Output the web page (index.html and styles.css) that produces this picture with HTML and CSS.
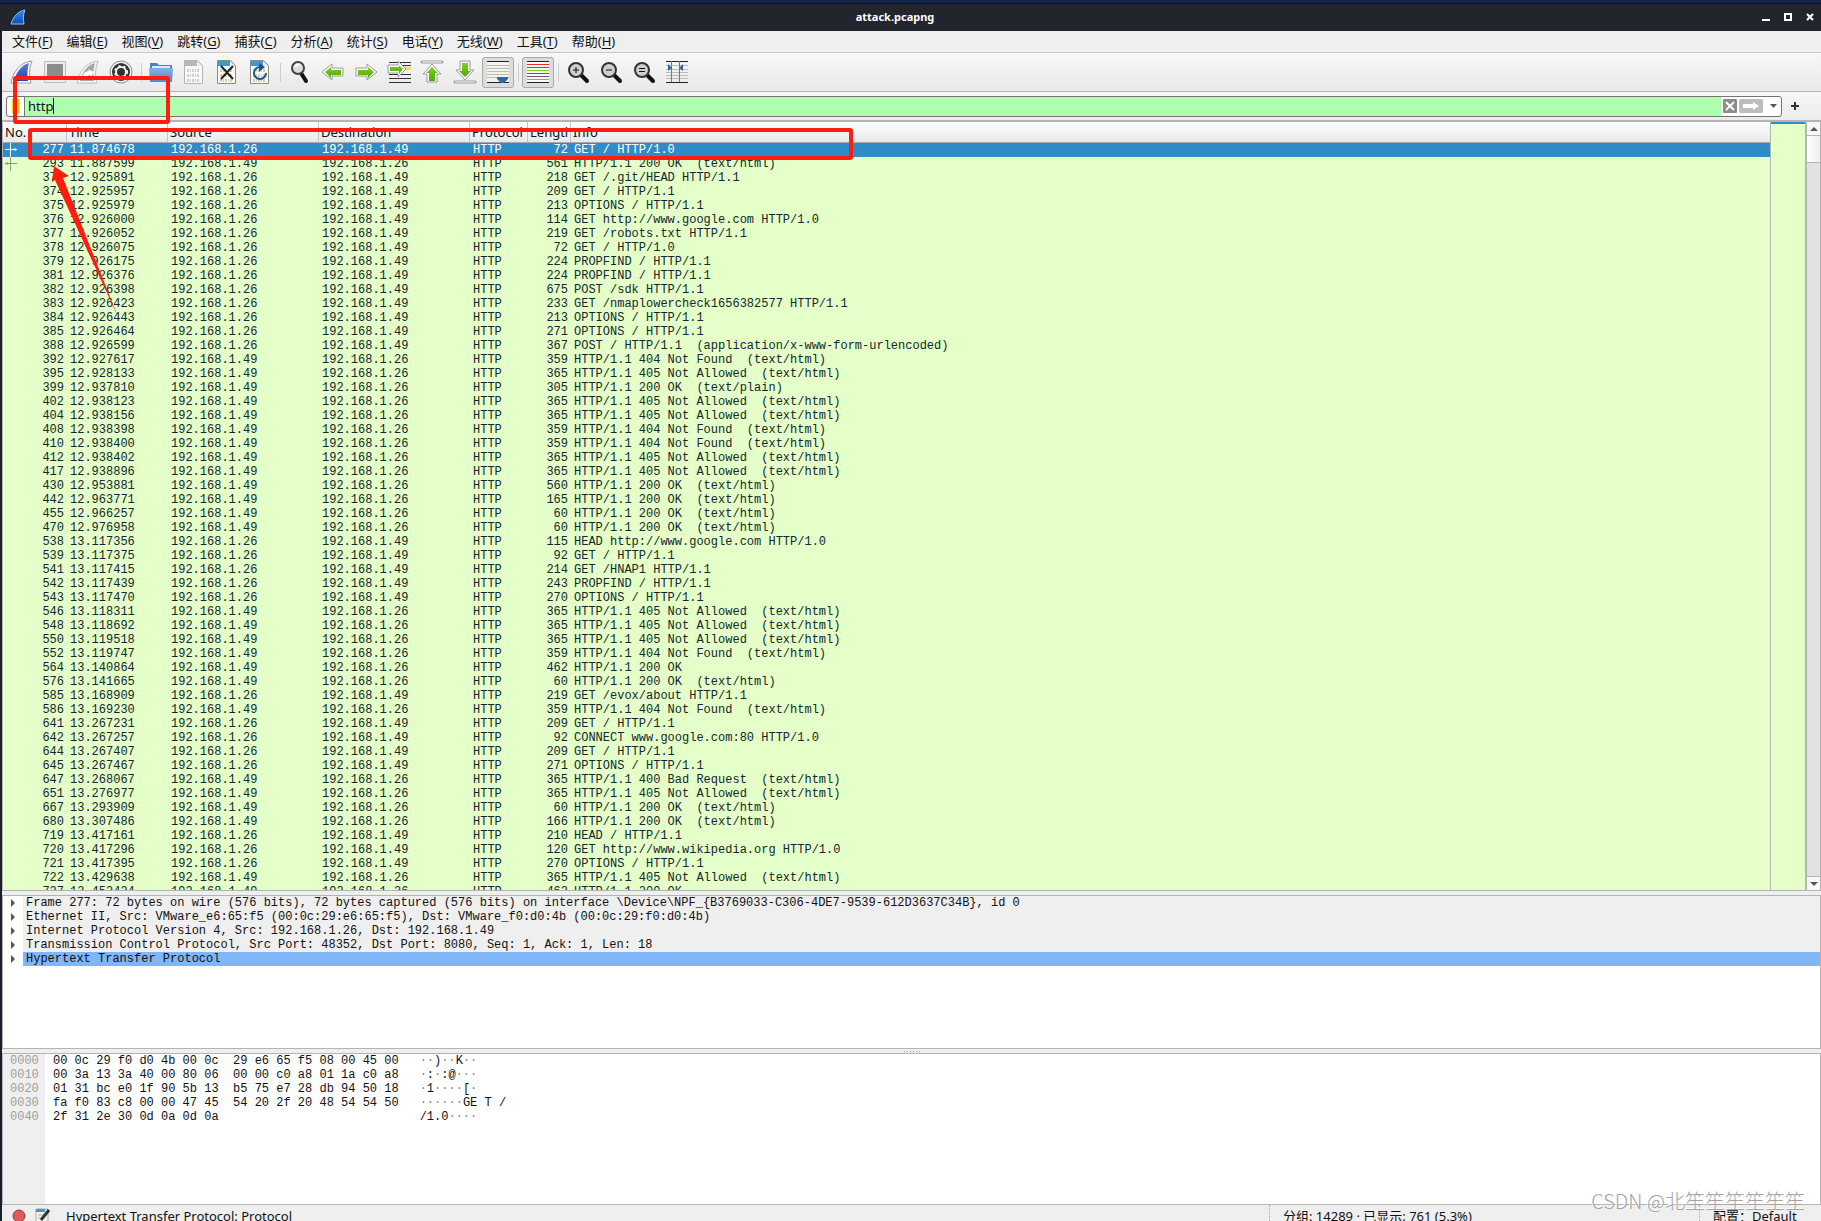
FILE: index.html
```
<!DOCTYPE html>
<html lang="zh-CN">
<head>
<meta charset="utf-8">
<title>attack.pcapng</title>
<link rel="stylesheet" href="styles.css">
</head>
<body>
<svg class="defs" width="0" height="0" aria-hidden="true">
  <defs>
    <linearGradient id="blueFin" x1="0" y1="0" x2="0" y2="1"><stop offset="0" stop-color="#5a82d8"/><stop offset="1" stop-color="#1d3fb8"/></linearGradient>
    <linearGradient id="logoFin" x1="0" y1="0" x2="0" y2="1"><stop offset="0" stop-color="#2f8df0"/><stop offset="1" stop-color="#0a4fc4"/></linearGradient>
    <linearGradient id="folder" x1="0" y1="0" x2="0" y2="1"><stop offset="0" stop-color="#86b0e4"/><stop offset="1" stop-color="#5088d2"/></linearGradient>
    <linearGradient id="green" x1="0" y1="0" x2="0" y2="1"><stop offset="0" stop-color="#7fd321"/><stop offset="1" stop-color="#4fa70c"/></linearGradient>
    <g id="lens"><path d="M14 14l6 6" stroke="#111" stroke-width="4" stroke-linecap="round"/><circle cx="9" cy="9" r="7" fill="#cfcfcf" stroke="#333" stroke-width="2"/></g>
    <g id="bits" fill="none" stroke-width="3" stroke-dasharray="2 1 1 1"><path d="M5 10.500h13M5 15.500h13M5 20.500h13"/></g>
  </defs>
</svg>
<div class="desktop">
<main class="window">
  <header class="titlebar">
    <svg class="logo" width="16" height="16" viewBox="0 0 16 16"><path d="M1 15C3 8 8 2 15 1c-2 5-2 9-1 14z" fill="url(#logoFin)" stroke="#8fc0f5"/></svg>
    <h1>attack.pcapng</h1>
    <div class="winbuttons">
      <button aria-label="最小化"><svg width="8" height="10"><path d="M0 7h8v2H0z" fill="#fff"/></svg></button>
      <button aria-label="最大化"><svg width="8" height="10"><path d="M1 2h6v6H1z" fill="none" stroke="#fff" stroke-width="2"/></svg></button>
      <button aria-label="关闭"><svg width="8" height="10"><path d="M1 2l6 6M7 2L1 8" stroke="#fff" stroke-width="2"/></svg></button>
    </div>
  </header>

  <nav class="menubar">
    <button>文件(<u>F</u>)</button><button>编辑(<u>E</u>)</button><button>视图(<u>V</u>)</button><button>跳转(<u>G</u>)</button><button>捕获(<u>C</u>)</button><button>分析(<u>A</u>)</button><button>统计(<u>S</u>)</button><button>电话(<u>Y</u>)</button><button>无线(<u>W</u>)</button><button>工具(<u>T</u>)</button><button>帮助(<u>H</u>)</button>
  </nav>

  <div class="toolbar" role="toolbar">
    <button aria-label="开始捕获"><svg width="24" height="24"><path d="M1 23C3 12 10 2 22 1c-3 8-3 15-1 22z" fill="#fff" stroke="#999"/><path d="M4 21C6 13 11 5 19 3c-2 7-2 12-1 18z" fill="url(#blueFin)"/></svg></button>
    <button aria-label="停止捕获"><svg width="24" height="24"><path d="M1.500 1.500h21v21h-21z" fill="#eee" stroke="#bbb"/><path d="M4 4h16v15H4z" fill="#8c8c8c"/></svg></button>
    <button aria-label="重新捕获"><svg width="24" height="24"><path d="M1 23C3 12 10 2 22 1c-3 8-3 15-1 22z" fill="#f6f6f6" stroke="#bbb"/><path d="M4 21C6 13 11 5 19 3c-2 7-2 12-1 18z" fill="#a6a6a6"/><path d="M7 19c-1-5 2-8 6-8l-1-2 6 3-3 5-1-2c-2 0-3 1-3 4z" fill="#fff"/></svg></button>
    <button aria-label="捕获选项"><svg width="24" height="24"><circle cx="12" cy="12" r="11" fill="#f4f4f4" stroke="#8a8a8a"/><circle cx="12" cy="12" r="9" fill="#333"/><circle cx="12" cy="12" r="5" fill="none" stroke="#f4f4f4" stroke-width="2"/><circle cx="12" cy="12" r="6" fill="none" stroke="#f4f4f4" stroke-width="2" stroke-dasharray="2 3"/><circle cx="12" cy="12" r="3" fill="#333"/></svg></button>
    <span class="sep"></span>
    <button aria-label="打开"><svg width="24" height="24"><path d="M1 3h7l2 2h13v16H1z" fill="#4d80c0"/><path d="M3 6h18v4H3z" fill="#dce8f6"/><path d="M0 8h24l-1 14H1z" fill="url(#folder)"/></svg></button>
    <button aria-label="保存"><svg width="24" height="24"><path d="M2.500 .500h13l5 5v18h-18z" fill="#fafafa" stroke="#b4b4b4"/><path d="M3 1h12l5 5H3z" fill="#b8b8b8"/><path d="M15 1v5h5z" fill="#eee"/><use href="#bits" stroke="#cfcfcf"/></svg></button>
    <button aria-label="关闭文件"><svg width="24" height="24"><path d="M2.500 .500h13l5 5v18h-18z" fill="#fbfbee" stroke="#8b8b7d"/><path d="M3 1h12l5 5H3z" fill="#3d9ad3"/><path d="M15 1v5h5z" fill="#e8f2fa"/><use href="#bits" stroke="#cdcdbc"/><path d="M6 6l12 13M18 6L6 19" stroke="#222" stroke-width="2"/></svg></button>
    <button aria-label="重新加载"><svg width="24" height="24"><path d="M2.500 .500h13l5 5v18h-18z" fill="#fbfbee" stroke="#8b8b7d"/><path d="M3 1h12l5 5H3z" fill="#3d9ad3"/><path d="M15 1v5h5z" fill="#e8f2fa"/><use href="#bits" stroke="#cdcdbc"/><path d="M12 7a6 6 0 1 0 6 6" fill="none" stroke="#23508f" stroke-width="2"/><path d="M11 3l6 4-6 5z" fill="#23508f"/></svg></button>
    <span class="sep"></span>
    <button aria-label="查找"><svg width="24" height="24"><path d="M13 13l5 8" stroke="#111" stroke-width="4" stroke-linecap="round"/><circle cx="10" cy="8" r="6" fill="#ddd" stroke="#444" stroke-width="2"/><path d="M7 7c1-2 3-3 5-2" stroke="#fff" stroke-width="2" fill="none"/></svg></button>
    <button aria-label="后退"><svg width="24" height="24"><path d="M1 12l10-8v4h11v8H11v4z" fill="#fff" stroke="#999"/><path d="M4 12l6-5v3h10v5H10v3z" fill="url(#green)"/></svg></button>
    <button aria-label="前进"><svg width="24" height="24"><path d="M23 12L13 4v4H2v8h11v4z" fill="#fff" stroke="#999"/><path d="M20 12l-6-5v3H4v5h10v3z" fill="url(#green)"/></svg></button>
    <button aria-label="转到分组"><svg width="24" height="24"><path d="M2 2.500h22M2 5.500h22M2 14.500h22M2 18.500h22M2 22.500h22" stroke="#2d3436" stroke-width="1"/><path d="M17 7h7v3h-7z" fill="#ffdf4d"/><path d="M19 9L11 1v4H1v8h10v4z" fill="#fff" stroke="#999"/><path d="M16 9l-4-4v2H3v4h9v3z" fill="url(#green)"/></svg></button>
    <button aria-label="首个分组"><svg width="24" height="24"><path d="M2 2h20" stroke="#999" stroke-width="3" stroke-linecap="round"/><path d="M2 2h20" stroke="#fff"/><path d="M12 4l9 10h-4v8H7v-8H3z" fill="#fff" stroke="#999"/><path d="M12 7l6 6h-3v8H9v-8H6z" fill="url(#green)"/></svg></button>
    <button aria-label="末个分组"><svg width="24" height="24"><path d="M2 22h20" stroke="#999" stroke-width="3" stroke-linecap="round"/><path d="M2 22h20" stroke="#fff"/><path d="M12 20L3 10h4V1h10v9h4z" fill="#fff" stroke="#999"/><path d="M12 17l-6-6h3V3h6v8h3z" fill="url(#green)"/></svg></button>
    <button class="on" aria-pressed="true" aria-label="自动滚动"><svg width="24" height="24"><path d="M1 1h22v22H1z" fill="#f2f2ef"/><path d="M1 5.500h22M1 8.500h22M1 11.500h22M1 14.500h22M1 17.500h22" stroke="#b9bbb4"/><path d="M1 1.500h22M1 22.500h22" stroke="#222"/><path d="M11 17h11v2l-4 4h-3l-4-4z" fill="#3465a4"/></svg></button>
    <span class="sep"></span>
    <button class="on" aria-pressed="true" aria-label="着色"><svg width="24" height="24"><path d="M1 1h22v22H1z" fill="#f8f8f8"/><path d="M1 1.500h22M1 22.500h22" stroke="#222"/><path d="M1 4.500h22" stroke="#ef2929"/><path d="M1 7.500h22" stroke="#3465a4"/><path d="M1 10.500h22" stroke="#73d216"/><path d="M1 13.500h22" stroke="#3465a4"/><path d="M1 16.500h22" stroke="#75507b"/><path d="M1 19.500h22" stroke="#c4a000"/></svg></button>
    <span class="sep"></span>
    <button aria-label="放大"><svg width="24" height="24"><use href="#lens" x="1" y="1"/><path d="M7 10h6M10 7v6" stroke="#111"/></svg></button>
    <button aria-label="缩小"><svg width="24" height="24"><use href="#lens" x="1" y="1"/><path d="M7 10h6" stroke="#111"/></svg></button>
    <button aria-label="正常大小"><svg width="24" height="24"><use href="#lens" x="1" y="1"/><path d="M7 8.500h6M7 11.500h6" stroke="#111"/></svg></button>
    <button aria-label="调整列宽"><svg width="24" height="24"><path d="M1 5.500h22M1 9.500h22M1 12.500h22M1 15.500h22M1 18.500h22" stroke="#b9bbb4"/><path d="M1 1.500h22M1 22.500h22" stroke="#222"/><path d="M6.500 1v21M14.500 1v21" stroke="#777"/><path d="M3 4l4 4-4 3zM18 4l-4 4 4 3z" fill="#3465a4"/></svg></button>
  </div>

  <div class="filterbar">
    <div class="filterbox">
      <button class="bookmark" aria-label="书签"><svg width="8" height="14"><path d="M0 0h8v14H0z" fill="#f5d900"/></svg></button>
      <label class="filter"><input type="text" value="http" aria-label="显示过滤器"><span class="caret"></span></label>
      <button aria-label="清除"><svg width="14" height="14"><rect width="14" height="14" rx="1" fill="#8b8e88"/><path d="M3 3l8 8M11 3l-8 8" stroke="#fff" stroke-width="2"/></svg></button>
      <button aria-label="应用"><svg width="24" height="14"><rect width="24" height="14" rx="2" fill="#bdbdbd"/><path d="M4 5h10V3l6 4-6 4V9H4z" fill="#fff"/></svg></button>
      <button class="drop" aria-label="历史"><svg width="8" height="14"><path d="M1 5h7L4.500 9z" fill="#555"/></svg></button>
    </div>
    <button class="add" aria-label="添加按钮"><svg width="8" height="8"><path d="M0 4h8M4 0v8" stroke="#333" stroke-width="2"/></svg></button>
  </div>

  <section class="packets">
    <div class="list">
      <table>
        <colgroup><col class="c-no"><col class="c-time"><col class="c-addr"><col class="c-addr"><col class="c-proto"><col class="c-len"><col></colgroup>
        <thead><tr><th>No.</th><th>Time</th><th>Source</th><th>Destination</th><th>Protocol</th><th>Length</th><th>Info</th></tr></thead>
        <tbody>
        <tr class="selected"><td><svg class="mark" width="16" height="14"><path d="M7.500 0v14M2 6.500h12M12 5v3" stroke="#fff"/></svg>277<td>11.874678<td>192.168.1.26<td>192.168.1.49<td>HTTP<td>72<td>GET / HTTP/1.0</tr>
        <tr><td><svg class="mark" width="16" height="14"><path d="M7.500 0v14M2 6.500h12M4 5v3" stroke="#8b9a80"/></svg>293<td>11.887599<td>192.168.1.49<td>192.168.1.26<td>HTTP<td>561<td>HTTP/1.1 200 OK  (text/html)</tr>
        <tr><td>372<td>12.925891<td>192.168.1.26<td>192.168.1.49<td>HTTP<td>218<td>GET /.git/HEAD HTTP/1.1</tr>
        <tr><td>374<td>12.925957<td>192.168.1.26<td>192.168.1.49<td>HTTP<td>209<td>GET / HTTP/1.1</tr>
        <tr><td>375<td>12.925979<td>192.168.1.26<td>192.168.1.49<td>HTTP<td>213<td>OPTIONS / HTTP/1.1</tr>
        <tr><td>376<td>12.926000<td>192.168.1.26<td>192.168.1.49<td>HTTP<td>114<td>GET http://www.google.com HTTP/1.0</tr>
        <tr><td>377<td>12.926052<td>192.168.1.26<td>192.168.1.49<td>HTTP<td>219<td>GET /robots.txt HTTP/1.1</tr>
        <tr><td>378<td>12.926075<td>192.168.1.26<td>192.168.1.49<td>HTTP<td>72<td>GET / HTTP/1.0</tr>
        <tr><td>379<td>12.926175<td>192.168.1.26<td>192.168.1.49<td>HTTP<td>224<td>PROPFIND / HTTP/1.1</tr>
        <tr><td>381<td>12.926376<td>192.168.1.26<td>192.168.1.49<td>HTTP<td>224<td>PROPFIND / HTTP/1.1</tr>
        <tr><td>382<td>12.926398<td>192.168.1.26<td>192.168.1.49<td>HTTP<td>675<td>POST /sdk HTTP/1.1</tr>
        <tr><td>383<td>12.926423<td>192.168.1.26<td>192.168.1.49<td>HTTP<td>233<td>GET /nmaplowercheck1656382577 HTTP/1.1</tr>
        <tr><td>384<td>12.926443<td>192.168.1.26<td>192.168.1.49<td>HTTP<td>213<td>OPTIONS / HTTP/1.1</tr>
        <tr><td>385<td>12.926464<td>192.168.1.26<td>192.168.1.49<td>HTTP<td>271<td>OPTIONS / HTTP/1.1</tr>
        <tr><td>388<td>12.926599<td>192.168.1.26<td>192.168.1.49<td>HTTP<td>367<td>POST / HTTP/1.1  (application/x-www-form-urlencoded)</tr>
        <tr><td>392<td>12.927617<td>192.168.1.49<td>192.168.1.26<td>HTTP<td>359<td>HTTP/1.1 404 Not Found  (text/html)</tr>
        <tr><td>395<td>12.928133<td>192.168.1.49<td>192.168.1.26<td>HTTP<td>365<td>HTTP/1.1 405 Not Allowed  (text/html)</tr>
        <tr><td>399<td>12.937810<td>192.168.1.49<td>192.168.1.26<td>HTTP<td>305<td>HTTP/1.1 200 OK  (text/plain)</tr>
        <tr><td>402<td>12.938123<td>192.168.1.49<td>192.168.1.26<td>HTTP<td>365<td>HTTP/1.1 405 Not Allowed  (text/html)</tr>
        <tr><td>404<td>12.938156<td>192.168.1.49<td>192.168.1.26<td>HTTP<td>365<td>HTTP/1.1 405 Not Allowed  (text/html)</tr>
        <tr><td>408<td>12.938398<td>192.168.1.49<td>192.168.1.26<td>HTTP<td>359<td>HTTP/1.1 404 Not Found  (text/html)</tr>
        <tr><td>410<td>12.938400<td>192.168.1.49<td>192.168.1.26<td>HTTP<td>359<td>HTTP/1.1 404 Not Found  (text/html)</tr>
        <tr><td>412<td>12.938402<td>192.168.1.49<td>192.168.1.26<td>HTTP<td>365<td>HTTP/1.1 405 Not Allowed  (text/html)</tr>
        <tr><td>417<td>12.938896<td>192.168.1.49<td>192.168.1.26<td>HTTP<td>365<td>HTTP/1.1 405 Not Allowed  (text/html)</tr>
        <tr><td>430<td>12.953881<td>192.168.1.49<td>192.168.1.26<td>HTTP<td>560<td>HTTP/1.1 200 OK  (text/html)</tr>
        <tr><td>442<td>12.963771<td>192.168.1.49<td>192.168.1.26<td>HTTP<td>165<td>HTTP/1.1 200 OK  (text/html)</tr>
        <tr><td>455<td>12.966257<td>192.168.1.49<td>192.168.1.26<td>HTTP<td>60<td>HTTP/1.1 200 OK  (text/html)</tr>
        <tr><td>470<td>12.976958<td>192.168.1.49<td>192.168.1.26<td>HTTP<td>60<td>HTTP/1.1 200 OK  (text/html)</tr>
        <tr><td>538<td>13.117356<td>192.168.1.26<td>192.168.1.49<td>HTTP<td>115<td>HEAD http://www.google.com HTTP/1.0</tr>
        <tr><td>539<td>13.117375<td>192.168.1.26<td>192.168.1.49<td>HTTP<td>92<td>GET / HTTP/1.1</tr>
        <tr><td>541<td>13.117415<td>192.168.1.26<td>192.168.1.49<td>HTTP<td>214<td>GET /HNAP1 HTTP/1.1</tr>
        <tr><td>542<td>13.117439<td>192.168.1.26<td>192.168.1.49<td>HTTP<td>243<td>PROPFIND / HTTP/1.1</tr>
        <tr><td>543<td>13.117470<td>192.168.1.26<td>192.168.1.49<td>HTTP<td>270<td>OPTIONS / HTTP/1.1</tr>
        <tr><td>546<td>13.118311<td>192.168.1.49<td>192.168.1.26<td>HTTP<td>365<td>HTTP/1.1 405 Not Allowed  (text/html)</tr>
        <tr><td>548<td>13.118692<td>192.168.1.49<td>192.168.1.26<td>HTTP<td>365<td>HTTP/1.1 405 Not Allowed  (text/html)</tr>
        <tr><td>550<td>13.119518<td>192.168.1.49<td>192.168.1.26<td>HTTP<td>365<td>HTTP/1.1 405 Not Allowed  (text/html)</tr>
        <tr><td>552<td>13.119747<td>192.168.1.49<td>192.168.1.26<td>HTTP<td>359<td>HTTP/1.1 404 Not Found  (text/html)</tr>
        <tr><td>564<td>13.140864<td>192.168.1.49<td>192.168.1.26<td>HTTP<td>462<td>HTTP/1.1 200 OK</tr>
        <tr><td>576<td>13.141665<td>192.168.1.49<td>192.168.1.26<td>HTTP<td>60<td>HTTP/1.1 200 OK  (text/html)</tr>
        <tr><td>585<td>13.168909<td>192.168.1.26<td>192.168.1.49<td>HTTP<td>219<td>GET /evox/about HTTP/1.1</tr>
        <tr><td>586<td>13.169230<td>192.168.1.49<td>192.168.1.26<td>HTTP<td>359<td>HTTP/1.1 404 Not Found  (text/html)</tr>
        <tr><td>641<td>13.267231<td>192.168.1.26<td>192.168.1.49<td>HTTP<td>209<td>GET / HTTP/1.1</tr>
        <tr><td>642<td>13.267257<td>192.168.1.26<td>192.168.1.49<td>HTTP<td>92<td>CONNECT www.google.com:80 HTTP/1.0</tr>
        <tr><td>644<td>13.267407<td>192.168.1.26<td>192.168.1.49<td>HTTP<td>209<td>GET / HTTP/1.1</tr>
        <tr><td>645<td>13.267467<td>192.168.1.26<td>192.168.1.49<td>HTTP<td>271<td>OPTIONS / HTTP/1.1</tr>
        <tr><td>647<td>13.268067<td>192.168.1.49<td>192.168.1.26<td>HTTP<td>365<td>HTTP/1.1 400 Bad Request  (text/html)</tr>
        <tr><td>651<td>13.276977<td>192.168.1.49<td>192.168.1.26<td>HTTP<td>365<td>HTTP/1.1 405 Not Allowed  (text/html)</tr>
        <tr><td>667<td>13.293909<td>192.168.1.49<td>192.168.1.26<td>HTTP<td>60<td>HTTP/1.1 200 OK  (text/html)</tr>
        <tr><td>680<td>13.307486<td>192.168.1.49<td>192.168.1.26<td>HTTP<td>166<td>HTTP/1.1 200 OK  (text/html)</tr>
        <tr><td>719<td>13.417161<td>192.168.1.26<td>192.168.1.49<td>HTTP<td>210<td>HEAD / HTTP/1.1</tr>
        <tr><td>720<td>13.417296<td>192.168.1.26<td>192.168.1.49<td>HTTP<td>120<td>GET http://www.wikipedia.org HTTP/1.0</tr>
        <tr><td>721<td>13.417395<td>192.168.1.26<td>192.168.1.49<td>HTTP<td>270<td>OPTIONS / HTTP/1.1</tr>
        <tr><td>722<td>13.429638<td>192.168.1.49<td>192.168.1.26<td>HTTP<td>365<td>HTTP/1.1 405 Not Allowed  (text/html)</tr>
        <tr><td>727<td>13.452424<td>192.168.1.49<td>192.168.1.26<td>HTTP<td>462<td>HTTP/1.1 200 OK</tr>
        </tbody>
      </table>
    </div>
    <div class="minimap"></div>
    <div class="scrollbar">
      <button aria-label="向上滚动"><svg width="8" height="4"><path d="M0 4h8L4 0z" fill="#555"/></svg></button>
      <div class="thumb"></div>
      <div class="trough"></div>
      <button class="down" aria-label="向下滚动"><svg width="8" height="4"><path d="M0 0h8L4 4z" fill="#555"/></svg></button>
    </div>
  </section>

  <div class="splitter"></div>

  <section class="details">
    <ul>
      <li><button aria-label="展开"></button><span>Frame 277: 72 bytes on wire (576 bits), 72 bytes captured (576 bits) on interface \Device\NPF_{B3769033-C306-4DE7-9539-612D3637C34B}, id 0</span></li>
      <li><button aria-label="展开"></button><span>Ethernet II, Src: VMware_e6:65:f5 (00:0c:29:e6:65:f5), Dst: VMware_f0:d0:4b (00:0c:29:f0:d0:4b)</span></li>
      <li><button aria-label="展开"></button><span>Internet Protocol Version 4, Src: 192.168.1.26, Dst: 192.168.1.49</span></li>
      <li><button aria-label="展开"></button><span>Transmission Control Protocol, Src Port: 48352, Dst Port: 8080, Seq: 1, Ack: 1, Len: 18</span></li>
      <li class="current"><button aria-label="展开"></button><span>Hypertext Transfer Protocol</span></li>
    </ul>
  </section>

  <div class="splitter"><i></i><i></i><i></i><i></i><i></i><i></i></div>

  <section class="bytes">
<pre class="offsets">0000
0010
0020
0030
0040</pre>
<pre class="hex">00 0c 29 f0 d0 4b 00 0c  29 e6 65 f5 08 00 45 00
00 3a 13 3a 40 00 80 06  00 00 c0 a8 01 1a c0 a8
01 31 bc e0 1f 90 5b 13  b5 75 e7 28 db 94 50 18
fa f0 83 c8 00 00 47 45  54 20 2f 20 48 54 54 50
2f 31 2e 30 0d 0a 0d 0a</pre>
<pre class="ascii"><s>··</s>)<s>··</s>K<s>··</s>
<s>·</s>:<s>·</s>:@<s>···</s>
<s>·</s>1<s>····</s>[<s>·</s>
<s>······</s>GE T /
/1.0<s>····</s></pre>
  </section>

  <footer class="status">
    <div class="state">
      <svg width="14" height="16"><circle cx="7" cy="8" r="6" fill="#e05a5a" stroke="#8c3b3b"/></svg>
      <svg width="16" height="16"><path d="M1 1h12v15H1z" fill="#f4f4ee" stroke="#aaa"/><path d="M1 1h9v3H1z" fill="#3d9ad3"/><path d="M3 7h6M3 10h5" stroke="#aaa"/><path d="M14 2L6 12" stroke="#333" stroke-width="3"/></svg>
      <span>Hypertext Transfer Protocol: Protocol</span>
    </div>
    <div class="count">分组: 14289 · 已显示: 761 (5.3%)</div>
    <div class="profile">配置：Default</div>
  </footer>

  <div class="watermark">CSDN @北笙笙笙笙笙笙</div>
  <div class="callout callout-filter"></div>
  <div class="callout callout-row"></div>
  <svg class="arrow" width="70" height="155" viewBox="0 0 70 155"><path d="M4 4l15 10-6 2 55 139L5 18l-3 2z" fill="#ff1d10"/></svg>
</main>
</div>
</body>
</html>
```

FILE: styles.css
```
* { box-sizing: border-box; }

body {
  margin: 0;
  background: #14203f;
  color: #111;
  font: 13px/18px "Noto Sans", "Noto Sans CJK SC", sans-serif;
}

button {
  display: flex;
  align-items: center;
  justify-content: center;
  margin: 0;
  padding: 0;
  border: 0;
  background: none;
  color: inherit;
  font: inherit;
}

.defs { position: absolute; }

.desktop {
  display: flex;
  height: 100vh;
  overflow: hidden;
  padding-top: 3px;
  background: linear-gradient(#12244d 3px, #1b1f2c 3px);
}

.window {
  position: relative;
  display: flex;
  flex: 1;
  flex-direction: column;
  min-width: 0;
  padding-left: 2px;
}

.titlebar {
  display: flex;
  align-items: center;
  height: 28px;
  margin-left: -2px;
  padding: 0 7px 2px 10px;
  border-top: 1px solid #0b1020;
  background: #22252e;
}

.titlebar h1 {
  flex: 1;
  margin: 0;
  padding-left: 2px;
  color: #fff;
  font-size: 11px;
  font-weight: 700;
  text-align: center;
}

.winbuttons { display: flex; gap: 14px; }

.menubar {
  display: flex;
  gap: 14px;
  height: 22px;
  padding: 0 10px 2px;
  border-bottom: 1px solid #c8c8c8;
  background: #efefef;
}

.menubar u { text-underline-offset: 2px; }

.toolbar {
  display: flex;
  align-items: center;
  gap: 1px;
  height: 39px;
  padding: 0 4px;
  border-bottom: 1px solid #b4b4b4;
  background: linear-gradient(#f8f8f8, #e9e9e9);
}

.toolbar button { width: 32px; height: 31px; }

.toolbar .on {
  border: 1px solid #aaa;
  border-radius: 3px;
  background: #dcdcdc;
}

.sep {
  width: 6px;
  height: 19px;
  background: linear-gradient(90deg, transparent 3px, #cdcdcd 3px, #cdcdcd 4px, transparent 4px);
}

.filterbar {
  display: flex;
  align-items: center;
  gap: 9px;
  height: 28px;
  padding: 0 22px 0 4px;
  background: linear-gradient(#f6f6f6, #ececec);
}

.filterbox {
  display: flex;
  flex: 1;
  align-items: center;
  height: 21px;
  padding-right: 4px;
  border: 1px solid #747474;
  border-radius: 3px;
  background: #fff;
}

.filterbox button { margin-left: 2px; }

.filterbox .bookmark {
  width: 17px;
  margin: 0;
}

.filterbox .drop { margin-left: 6px; }

.filter {
  display: flex;
  flex: 1;
  align-items: center;
  align-self: stretch;
  padding-left: 3px;
  border-left: 1px solid #747474;
  background: #afffaf;
}

.filter input {
  field-sizing: content;
  padding: 0;
  border: 0;
  outline: 0;
  background: none;
  color: #111;
  font: inherit;
}

.caret {
  width: 1px;
  height: 16px;
  background: #111;
}

.packets {
  display: flex;
  flex: 768 1 0;
  min-height: 0;
  border-top: 2px solid #b4b4b4;
  border-bottom: 1px solid #b4b4b4;
}

.list {
  flex: 1;
  overflow: hidden;
  border-left: 1px solid #b4b4b4;
  background: #e4ffc7;
}

table {
  width: 100%;
  border-collapse: separate;
  border-spacing: 0;
  table-layout: fixed;
}

.c-no { width: 64px; }
.c-time { width: 101px; }
.c-addr { width: 151px; }
.c-proto { width: 58px; }
.c-len { width: 43px; }

th {
  height: 21px;
  overflow: hidden;
  padding: 0 2px;
  border-right: 1px solid #c4c4c4;
  border-bottom: 1px solid #a8a8a8;
  background: linear-gradient(#fdfdfd, #e9e9e9);
  font-weight: 400;
  line-height: 20px;
  text-align: left;
  white-space: nowrap;
}

th:last-child { border-right: 0; }

td {
  height: 14px;
  overflow: hidden;
  padding: 0 3px;
  color: #12272e;
  font: 12px/14px "Liberation Mono", monospace;
  white-space: pre;
}

td:nth-child(1), td:nth-child(6) { text-align: right; }
td:first-child { padding-left: 0; }
.mark { float: left; }

.selected td {
  background: #308cc6;
  color: #fff;
}

.minimap {
  width: 37px;
  border: solid #b4b4b4;
  border-width: 0 2px 0 1px;
  background: linear-gradient(#308cc6 2px, #e4ffc7 2px);
}

.scrollbar {
  display: flex;
  flex-direction: column;
  width: 14px;
  border-right: 1px solid #b4b4b4;
}

.scrollbar button {
  height: 14px;
  border-bottom: 1px solid #b4b4b4;
  background: #f8f8f8;
}

.scrollbar .down {
  border-top: 1px solid #b4b4b4;
  border-bottom: 0;
}

.thumb {
  height: 27px;
  border-bottom: 1px solid #b4b4b4;
  background: linear-gradient(90deg, #fdfdfd, #efefef);
}

.trough {
  flex: 1;
  background: #e2e2e2;
}

.splitter {
  display: flex;
  align-items: center;
  justify-content: center;
  gap: 2px;
  height: 4px;
  background: #efefef;
}

.splitter i {
  width: 1px;
  height: 1px;
  background: #999;
}

.details {
  flex: 152 1 0;
  min-height: 0;
  border: 1px solid #b4b4b4;
  background: #fff;
}

.details ul {
  margin: 0;
  padding: 0;
  list-style: none;
}

.details li {
  display: flex;
  font: 12px/14px "Liberation Mono", monospace;
}

.details button { width: 20px; }

.details button::before {
  border: 4px solid transparent;
  border-right: 0;
  border-left-color: #555;
  content: "";
}

.details span {
  flex: 1;
  padding-left: 3px;
  background: #efefef;
  white-space: nowrap;
}

.details .current span { background: #80b5f7; }

.bytes {
  display: flex;
  flex: 150 1 0;
  min-height: 0;
  border: 1px solid #b4b4b4;
  background: #fff;
}

.bytes pre {
  margin: 0;
  font: 12px/14px "Liberation Mono", monospace;
}

.bytes .offsets {
  width: 42px;
  padding-left: 7px;
  background: #efefef;
  color: #a0a0a0;
}

.bytes .hex { padding-left: 8px; }
.bytes .ascii { padding-left: 21px; }

.bytes s {
  color: #888;
  text-decoration: none;
}

.status {
  display: flex;
  height: 16px;
  background: #efefef;
  line-height: 23px;
  white-space: nowrap;
}

.status svg { margin-top: 3px; }

.state {
  display: flex;
  flex: 1;
  gap: 9px;
  padding-left: 10px;
}

.state span { padding-left: 6px; }

.count, .profile {
  padding-left: 13px;
  border-left: 1px dotted #aaa;
}

.count { width: 430px; }

.profile {
  width: 122px;
  font-family: "Noto Sans", "Noto Sans CJK TC", sans-serif;
}

.watermark {
  position: absolute;
  right: 16px;
  bottom: 8px;
  color: #a4a4a4;
  font: 300 20px/24px "Noto Sans CJK SC", sans-serif;
  text-shadow: -1px -1px #fff;
}

.callout {
  position: absolute;
  border: 4px solid #ff1d10;
  border-radius: 3px;
}

.callout-filter {
  top: 73px;
  left: 13px;
  width: 157px;
  height: 48px;
}

.callout-row {
  top: 125px;
  left: 28px;
  width: 825px;
  height: 32px;
}

.arrow {
  position: absolute;
  top: 159px;
  left: 50px;
}
```
